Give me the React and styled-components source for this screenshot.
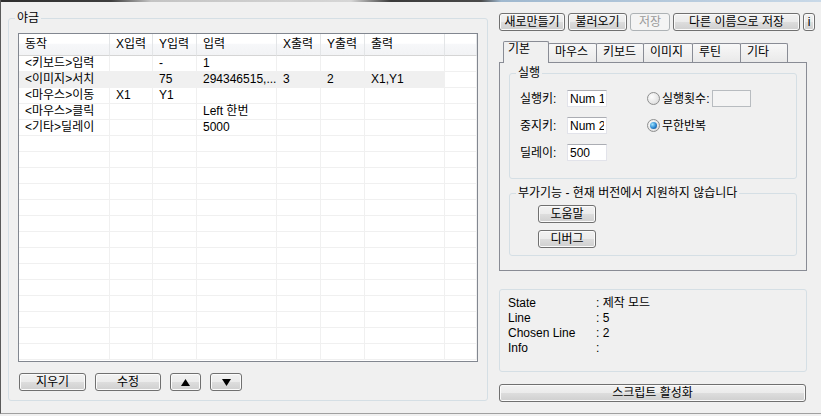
import React from "react"
import styled, { createGlobalStyle, css } from "styled-components"

const GlobalStyle = createGlobalStyle`
  html, body {
    margin: 0;
    padding: 0;
    background: #f0f0f0;
  }
  body {
    font-family: "Liberation Sans", "Noto Sans CJK KR", sans-serif;
    font-size: 12px;
    color: #000;
  }
`

const columns = [
  { label: "동작", width: 91 },
  { label: "X입력", width: 43 },
  { label: "Y입력", width: 44 },
  { label: "입력", width: 80 },
  { label: "X출력", width: 44 },
  { label: "Y출력", width: 44 },
  { label: "출력", width: 80 },
  { label: "", width: 32 },
]

const rows = [
  ["<키보드>입력", "", "-", "1", "", "", ""],
  ["<이미지>서치", "", "75", "294346515,...", "3", "2", "X1,Y1"],
  ["<마우스>이동", "X1", "Y1", "", "", "", ""],
  ["<마우스>클릭", "", "", "Left 한번", "", "", ""],
  ["<기타>딜레이", "", "", "5000", "", "", ""],
]
const selectedRow = 1
const totalRows = 19

const tabs = [
  { id: "basic", label: "기본", width: 46 },
  { id: "mouse", label: "마우스", width: 49 },
  { id: "keyboard", label: "키보드", width: 48 },
  { id: "image", label: "이미지", width: 50 },
  { id: "routine", label: "루틴", width: 49 },
  { id: "etc", label: "기타", width: 48 },
]

const status = [
  ["State", ": 제작 모드"],
  ["Line", ": 5"],
  ["Chosen Line", ": 2"],
  ["Info", ":"],
]

const Arrow = ({ up }) => (
  <svg width="9" height="7" viewBox="0 0 9 7">
    <polygon points={up ? "4.5,0 9,7 0,7" : "0,0 9,0 4.5,7"} fill="#000" />
  </svg>
)

const App = () => {
  return (
    <>
      <GlobalStyle />
      <Window>
        <TitleEdge />
        <Body>
          <MainGroup>
            <Caption>야금</Caption>
            <ListView>
              <Table>
                <colgroup>
                  {columns.map((c, i) => (
                    <col key={i} style={{ width: c.width }} />
                  ))}
                </colgroup>
                <thead>
                  <tr>
                    {columns.map((c, i) => (
                      <HeadCell key={i}>{c.label}</HeadCell>
                    ))}
                  </tr>
                </thead>
                <tbody>
                  {Array.from({ length: totalRows }).map((_, r) => {
                    const data = rows[r] || []
                    return (
                      <tr key={r}>
                        {columns.map((c, i) => (
                          <Cell key={i} $selected={r === selectedRow && i < 7}>
                            {data[i] || ""}
                          </Cell>
                        ))}
                      </tr>
                    )
                  })}
                </tbody>
              </Table>
            </ListView>
            <ButtonRow>
              <Button $w={67}>지우기</Button>
              <Button $w={66}>수정</Button>
              <Button $w={31}>
                <Arrow up />
              </Button>
              <Button $w={32}>
                <Arrow />
              </Button>
            </ButtonRow>
          </MainGroup>

          <SideColumn>
            <Toolbar>
              <Button $w={66}>새로만들기</Button>
              <Button $w={59}>불러오기</Button>
              <Button $w={40} disabled>
                저장
              </Button>
              <Button $w={127}>다른 이름으로 저장</Button>
              <Button $w={12}>i</Button>
            </Toolbar>

            <TabStrip>
              {tabs.map((t, i) => (
                <Tab key={t.id} $w={t.width} $active={i === 0}>
                  {t.label}
                </Tab>
              ))}
            </TabStrip>
            <TabPanel>
              <RunGroup>
                <Caption>실행</Caption>
                <FormRow>
                  <FieldLabel>실행키:</FieldLabel>
                  <TextBox readOnly value="Num 1" />
                  <RadioOption>
                    <Radio />
                    <span>실행횟수:</span>
                    <TextBox readOnly value="" $w={39} disabled />
                  </RadioOption>
                </FormRow>
                <FormRow>
                  <FieldLabel>중지키:</FieldLabel>
                  <TextBox readOnly value="Num 2" />
                  <RadioOption>
                    <Radio $checked />
                    <span>무한반복</span>
                  </RadioOption>
                </FormRow>
                <FormRow>
                  <FieldLabel>딜레이:</FieldLabel>
                  <TextBox readOnly value="500" />
                </FormRow>
              </RunGroup>
              <ExtraGroup>
                <Caption>부가기능 - 현재 버전에서 지원하지 않습니다</Caption>
                <Button $w={58}>도움말</Button>
                <Button $w={58}>디버그</Button>
              </ExtraGroup>
            </TabPanel>

            <StatusBox>
              {status.map(([k, v]) => (
                <React.Fragment key={k}>
                  <span>{k}</span>
                  <span>{v}</span>
                </React.Fragment>
              ))}
            </StatusBox>
            <WideButton $w={307}>스크립트 활성화</WideButton>
          </SideColumn>
        </Body>
      </Window>
    </>
  )
}

const Window = styled.div`
  width: 821px;
  height: 414px;
  box-sizing: border-box;
  border-left: 1px solid #5a5a5a;
  border-bottom: 1px solid #a0a0a0;
  background: #f0f0f0;
  display: flex;
  flex-direction: column;
`

const TitleEdge = styled.div`
  height: 2px;
  background: linear-gradient(
    90deg,
    #2e2e2e 0,
    #3e3e3e 110px,
    #c4c4c4 150px,
    #d6d6d6 350px,
    #3a3a3a 390px,
    #4a4a4a 480px,
    #9fb8cf 500px,
    #c9d9e8 821px
  );
`

const Body = styled.div`
  display: flex;
  align-items: flex-start;
  gap: 11px;
  padding: 11px 0 0 7px;
`

const GroupBox = styled.div`
  position: relative;
  box-sizing: border-box;
  border: 1px solid #d5dfe5;
  border-radius: 3px;
`

const Caption = styled.span`
  position: absolute;
  top: -8px;
  left: 6px;
  padding: 0 2px;
  background: #f0f0f0;
  line-height: 14px;
  white-space: nowrap;
`

const MainGroup = styled(GroupBox)`
  width: 480px;
  height: 383px;
  margin-top: 5px;
  padding: 14px 9px 0 9px;
  display: flex;
  flex-direction: column;
`

const ListView = styled.div`
  width: 460px;
  height: 329px;
  box-sizing: border-box;
  border: 1px solid #828790;
  background: #fff;
  overflow: hidden;
`

const Table = styled.table`
  table-layout: fixed;
  width: 458px;
  border-collapse: separate;
  border-spacing: 0;
  font-size: 12px;
`

const HeadCell = styled.th`
  height: 21px;
  padding: 0 0 0 6px;
  font-weight: normal;
  text-align: left;
  line-height: 21px;
  white-space: nowrap;
  overflow: hidden;
  background: linear-gradient(#ffffff 0%, #ffffff 45%, #f7f8fa 46%, #f2f3f5 100%);
  border-right: 1px solid #e3e5e7;
  border-bottom: 1px solid #d5d5d5;
`

const Cell = styled.td`
  height: 15px;
  padding: 0 0 0 6px;
  line-height: 15px;
  white-space: nowrap;
  overflow: hidden;
  border-right: 1px solid #f0f0f0;
  border-bottom: 1px solid #f0f0f0;
  background: ${p => (p.$selected ? "#f0f0f0" : "#fff")};
`

const ButtonRow = styled.div`
  display: flex;
  gap: 9px;
  margin-top: 11px;
  padding-left: 1px;
`

const Button = styled.button`
  box-sizing: border-box;
  flex-shrink: 0;
  width: ${p => p.$w}px;
  height: ${p => p.$h || 18}px;
  padding: 0;
  display: flex;
  align-items: center;
  justify-content: center;
  font: inherit;
  font-size: 12px;
  line-height: 14px;
  color: #000;
  white-space: nowrap;
  border: 1px solid #707070;
  border-radius: 3px;
  background: linear-gradient(#f2f2f2 0%, #ebebeb 50%, #dddddd 51%, #cfcfcf 100%);
  box-shadow: inset 0 0 0 1px #fbfbfb;
  &:disabled {
    color: #9a9a9a;
    border-color: #adb2b5;
    background: #f4f4f4;
    box-shadow: none;
  }
`

const WideButton = styled(Button)`
  margin-top: 12px;
`

const SideColumn = styled.div`
  width: 308px;
  display: flex;
  flex-direction: column;
`

const Toolbar = styled.div`
  display: flex;
  gap: 3px;
`

const TabStrip = styled.div`
  position: relative;
  z-index: 1;
  display: flex;
  align-items: flex-end;
  height: 21px;
  margin-top: 10px;
  padding-left: 4px;
`

const Tab = styled.div`
  box-sizing: border-box;
  width: ${p => p.$w}px;
  height: 19px;
  margin-left: -1px;
  padding-left: 6px;
  line-height: 16px;
  border: 1px solid #898c95;
  border-bottom: none;
  border-radius: 2px 2px 0 0;
  background: linear-gradient(#f8f8f8, #e9e9e9);
  white-space: nowrap;
  ${p =>
    p.$active &&
    css`
      position: relative;
      z-index: 1;
      margin-left: 0;
      height: 22px;
      margin-bottom: -1px;
      padding-left: 4px;
      line-height: 14px;
      background: #f0f0f0;
    `}
`

const TabPanel = styled.div`
  box-sizing: border-box;
  width: 308px;
  height: 209px;
  border: 1px solid #898c95;
  padding: 10px 9px 0 9px;
  display: flex;
  flex-direction: column;
  gap: 14px;
`

const RunGroup = styled(GroupBox)`
  height: 106px;
  padding: 16px 0 0 10px;
  display: flex;
  flex-direction: column;
  gap: 10px;
`

const ExtraGroup = styled(GroupBox)`
  height: 63px;
  padding: 11px 0 0 28px;
  display: flex;
  flex-direction: column;
  gap: 7px;
`

const FormRow = styled.div`
  display: flex;
  align-items: center;
  height: 17px;
  line-height: 14px;
`

const FieldLabel = styled.span`
  width: 47px;
  white-space: nowrap;
`

const TextBox = styled.input`
  box-sizing: border-box;
  width: ${p => p.$w || 40}px;
  height: 17px;
  margin: 0;
  padding: 0 2px;
  font: inherit;
  font-size: 12px;
  color: #000;
  border: 1px solid #e2e3ea;
  border-top-color: #abadb3;
  background: #fff;
  outline: none;
  &:disabled {
    border-color: #b8bcc0;
    background: #f4f4f4;
  }
`

const RadioOption = styled.div`
  display: flex;
  align-items: center;
  gap: 2px;
  margin-left: 40px;
  white-space: nowrap;
`

const Radio = styled.span`
  position: relative;
  box-sizing: border-box;
  width: 13px;
  height: 13px;
  border-radius: 50%;
  border: 1px solid #8e8f8f;
  background: radial-gradient(circle at 35% 35%, #fdfdfd 0%, #e6e6e6 60%, #cfcfcf 100%);
  ${p =>
    p.$checked &&
    css`
      &::after {
        content: "";
        position: absolute;
        left: 2px;
        top: 2px;
        width: 7px;
        height: 7px;
        border-radius: 50%;
        background: radial-gradient(circle at 35% 35%, #9ee4ff 0%, #2a86d0 55%, #0c3f7c 100%);
      }
    `}
`

const StatusBox = styled(GroupBox)`
  height: 83px;
  margin-top: 18px;
  padding: 6px 0 0 8px;
  display: grid;
  grid-template-columns: 88px 1fr;
  grid-auto-rows: 15px;
  align-content: start;
  line-height: 15px;
`

export default App
